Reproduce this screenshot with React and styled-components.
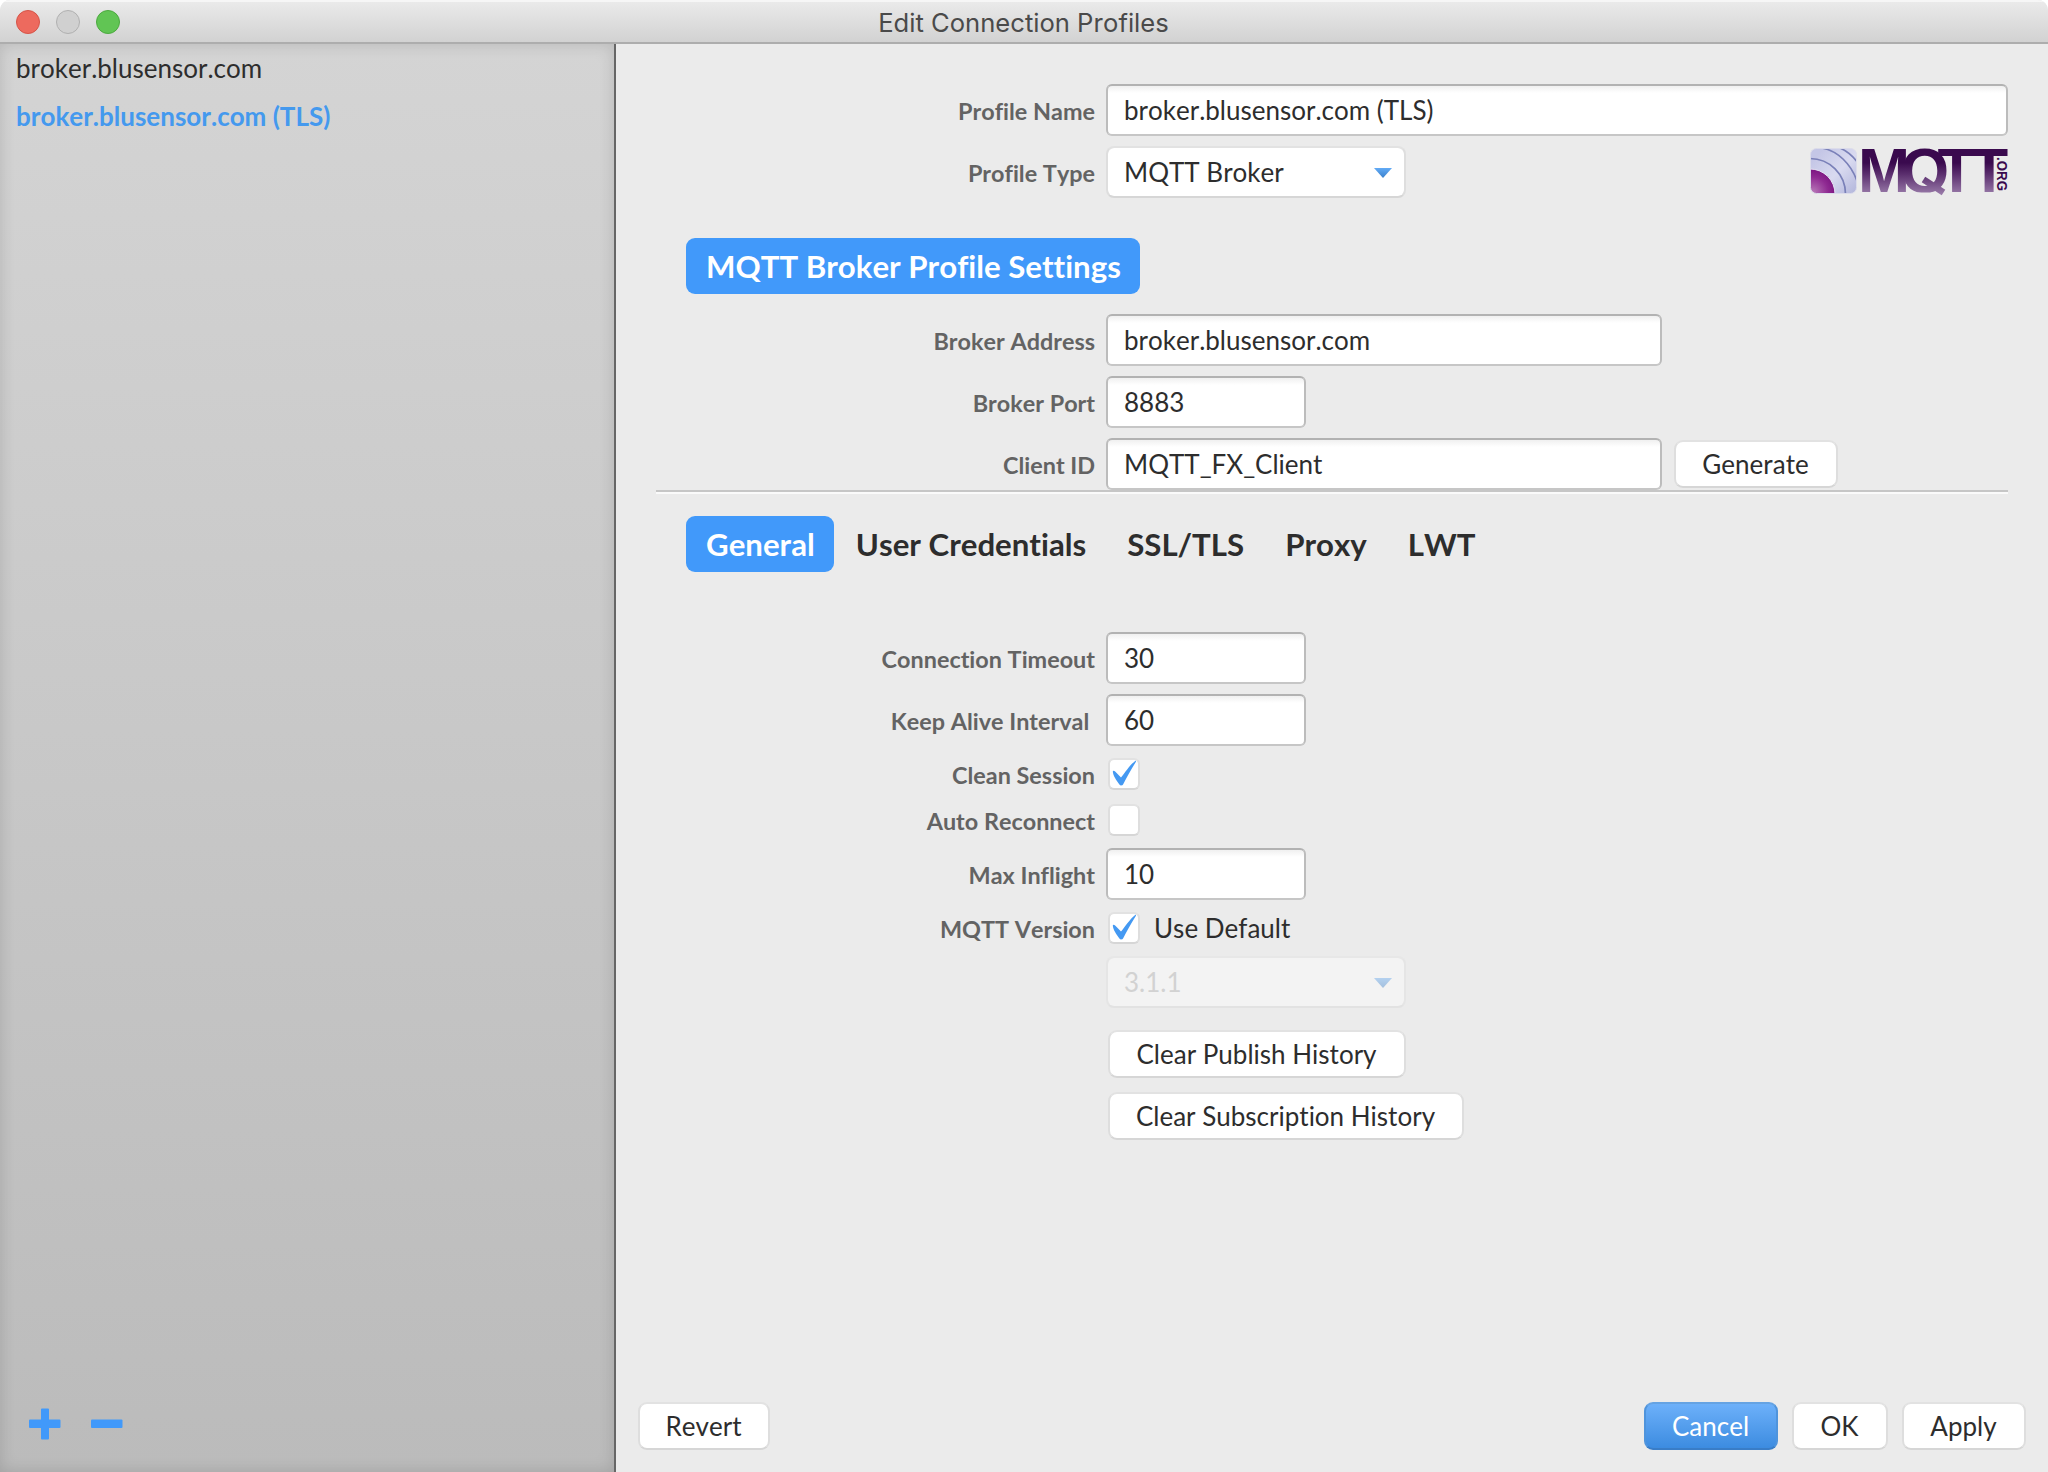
import React from "react";
import styled, { createGlobalStyle, css } from "styled-components";

const GlobalStyle = createGlobalStyle`
  * { box-sizing: border-box; }
  html, body { margin: 0; padding: 0; background: #fff; }
  body {
    font-family: Lato, "Noto Sans", sans-serif;
    font-size: 26px;
    font-kerning: none;
    font-variant-ligatures: none;
    color: #2d2d2d;
    overflow: hidden;
  }
`;

const Window = styled.div`
  display: flex;
  flex-direction: column;
  width: 2048px;
  height: 1472px;
  border-radius: 10px 10px 0 0;
  overflow: hidden;
  background: #ebebeb;
`;

const TitleBar = styled.header`
  flex: none;
  display: grid;
  grid-template-columns: 1fr auto 1fr;
  align-items: center;
  height: 44px;
  padding: 0 17px 0 16px;
  background: linear-gradient(#ebebeb, #d2d2d2);
  border-bottom: 2px solid #adadad;
  box-shadow: inset 0 2px 0 #f6f6f6;
`;

const Title = styled.h1`
  margin: 3px 0 0;
  font-family: Inter, Roboto, sans-serif;
  font-size: 25.6px;
  font-weight: 400;
  line-height: 30px;
  color: #4a4a4a;
`;

const TrafficLights = styled.div`
  display: flex;
  gap: 16px;
  padding-top: 2px;
`;

const Light = styled.span`
  width: 24px;
  height: 24px;
  border-radius: 50%;
  background: ${(p) => p.$fill};
  border: 1px solid ${(p) => p.$edge};
`;

const Body = styled.div`
  flex: 1;
  display: flex;
  min-height: 0;
`;

const Sidebar = styled.aside`
  flex: none;
  display: flex;
  flex-direction: column;
  justify-content: space-between;
  width: 616px;
  border-right: 2px solid #666;
  background: linear-gradient(#d4d4d4, #bbbbbb);
  box-shadow: inset 0 0 16px rgba(0, 0, 0, 0.14);
`;

const ProfileList = styled.ul`
  margin: 0;
  padding: 0;
  list-style: none;
`;

const ProfileItem = styled.li`
  height: 48px;
  padding: 0 16px;
  line-height: 48px;
  ${(p) =>
    p.$selected &&
    css`
      font-weight: 700;
      color: #4499ee;
    `}
`;

const ListActions = styled.div`
  display: flex;
  gap: 30px;
  padding: 0 29px 32px;
`;

const Panel = styled.main`
  flex: 1;
  display: flex;
  flex-direction: column;
  min-width: 0;
  padding: 40px 22px 22px;
`;

const Section = styled.section`
  display: flex;
  flex-direction: column;
  gap: 10px;
  padding: 0 18px;
  margin-top: ${(p) => p.$top || 0}px;
`;

const FormRow = styled.div`
  display: flex;
  align-items: center;
  gap: 10px;
  height: ${(p) => (p.$compact ? 36 : 52)}px;
`;

const Label = styled.label`
  flex: none;
  width: 440px;
  padding: 2px 1px 0 0;
  text-align: right;
  white-space: pre;
  font-size: 23.4px;
  font-weight: 700;
  color: #636363;
`;

const TextField = styled.input`
  ${(p) => (p.$width ? css`width: ${p.$width}px;` : css`flex: 1; min-width: 0;`)}
  height: 52px;
  padding: 0 16px;
  border: 2px solid;
  border-color: #b2b2b2 #bcbcbc #c6c6c6;
  border-radius: 6px;
  background: linear-gradient(#f0f0f0, #fff 7px);
  font: inherit;
  font-kerning: none;
  font-variant-ligatures: none;
  color: #2d2d2d;
  outline: none;
`;

const Combo = styled.div`
  display: flex;
  align-items: center;
  justify-content: space-between;
  width: 300px;
  height: 52px;
  padding: 0 12px 0 16px;
  border: 2px solid;
  border-color: #e2e2e2 #dedede #d6d6d6;
  border-radius: 8px;
  background: #fff;
  background-clip: padding-box;
  opacity: ${(p) => (p.$disabled ? 0.4 : 1)};
`;

const ComboText = styled.span`
  color: ${(p) => (p.$disabled ? "#adadad" : "inherit")};
`;

const ComboArrow = styled.svg`
  width: 18px;
  height: 10px;
  margin-top: 2px;
`;

const CheckBox = styled.span`
  display: flex;
  width: 32px;
  height: 32px;
  margin-left: 2px;
  border: 2px solid;
  border-color: #e2e2e2 #dedede #d6d6d6;
  border-radius: 6px;
  background: #fff;
  background-clip: padding-box;
`;

const CheckCaption = styled.span`
  margin-left: 4px;
`;

const Button = styled.button`
  width: ${(p) => p.$width}px;
  height: 48px;
  margin: 0 ${(p) => p.$inset || 0}px;
  padding: 0 1px 0 0;
  border: 2px solid;
  border-color: #e2e2e2 #dedede #d6d6d6;
  border-radius: 9px;
  background: #fff;
  font: inherit;
  font-kerning: none;
  font-variant-ligatures: none;
  color: #2d2d2d;
  ${(p) =>
    p.$primary &&
    css`
      color: #fff;
      background: linear-gradient(#6fb2fb, #3a8adf) border-box;
      border-color: #65a3e3 #4f94dc #397dc7;
    `}
`;

const BadgeHeading = styled.h2`
  align-self: flex-start;
  height: 56px;
  margin: 40px 0 20px 48px;
  padding: 0 19px 0 20px;
  border-radius: 9px;
  background: #4199fa;
  font-size: 31.2px;
  line-height: 56px;
  font-weight: 700;
  color: #fff;
`;

const Divider = styled.div`
  height: 4px;
  margin: 0 18px;
  background: linear-gradient(#c6c6c6 50%, #fafafa 50%);
`;

const Tabs = styled.nav`
  display: flex;
  gap: 2px;
  margin: 22px 0 0 48px;
`;

const Tab = styled.div`
  height: 56px;
  padding: 0 19px 0 20px;
  border-radius: 9px;
  font-size: 31.2px;
  line-height: 56px;
  font-weight: 700;
  ${(p) =>
    p.$active &&
    css`
      color: #fff;
      background: #4199fa;
    `}
`;

const HistoryActions = styled.div`
  display: flex;
  flex-direction: column;
  align-items: flex-start;
  gap: 14px;
  margin-top: 12px;
  padding-left: 452px;
`;

const Footer = styled.footer`
  display: flex;
  justify-content: space-between;
  margin-top: auto;
`;

const FooterGroup = styled.div`
  display: flex;
  gap: 14px;
`;

const Logo = styled.svg`
  flex: none;
  align-self: flex-start;
  width: 200px;
  height: 54px;
  margin: 0 -2px 0 auto;
  overflow: visible;
`;

const Dropdown = ({ value, disabled }) => (
  <Combo $disabled={disabled}>
    <ComboText $disabled={disabled}>{value}</ComboText>
    <ComboArrow viewBox="0 0 18 10">
      <defs>
        <linearGradient id="arrow" x1="0" y1="0" x2="0" y2="1">
          <stop offset="0" stopColor="#62abf6" />
          <stop offset="1" stopColor="#3a80cb" />
        </linearGradient>
      </defs>
      <path d="M0 0H18L9 10Z" fill="url(#arrow)" />
    </ComboArrow>
  </Combo>
);

const Check = ({ checked }) => (
  <CheckBox>
    {checked && (
      <svg width="28" height="28" viewBox="2 2 28 28">
        <path
          d="M4.8 13.4C4.8 12.4 6.4 12.8 7.4 13.8L13 19.6C17 14.6 22 7 26.6 3.4C27.6 2.4 28.4 2.8 27.8 4C23 11.6 18.6 19.6 15.2 26.2C14.4 27.8 12.2 27.8 11.2 26.2C8.6 22.4 5 17.6 4.8 13.4Z"
          fill="#4499f2"
        />
      </svg>
    )}
  </CheckBox>
);

const MqttLogo = () => (
  <Logo viewBox="0 0 200 54">
    <defs>
      <linearGradient id="wordmark" gradientUnits="userSpaceOnUse" x1="0" y1="3" x2="0" y2="49">
        <stop offset="0.3" stopColor="#3a0a4e" />
        <stop offset="0.55" stopColor="#5b2f6e" />
        <stop offset="1" stopColor="#9b7dab" />
      </linearGradient>
      <linearGradient id="waves" gradientUnits="userSpaceOnUse" x1="8" y1="8" x2="46" y2="46">
        <stop offset="0" stopColor="#c4c6e6" />
        <stop offset="0.5" stopColor="#d9daf0" />
        <stop offset="1" stopColor="#b4b7dc" />
      </linearGradient>
      <radialGradient id="core" gradientUnits="userSpaceOnUse" cx="3" cy="46" r="25">
        <stop offset="0" stopColor="#b777b7" />
        <stop offset="0.6" stopColor="#8f2a92" />
        <stop offset="1" stopColor="#76107c" />
      </radialGradient>
      <clipPath id="tile">
        <rect x="0.5" y="2.5" width="46" height="45" rx="6" />
      </clipPath>
      <clipPath id="baseline">
        <rect x="46" y="0" width="160" height="46.5" />
      </clipPath>
    </defs>
    <g clipPath="url(#tile)">
      <rect width="48" height="50" fill="url(#waves)" />
      <g fill="none" stroke="#7a80b8" strokeWidth="1.7">
        <path d="M0 12.500A35.500 35.500 0 0 1 35.500 48" />
        <path d="M12 2C28 5 41 18 47 35" />
        <path d="M30 2C37 5 43 10 48 17" />
      </g>
      <circle cx="0" cy="48" r="25" fill="url(#core)" stroke="#e4e2f2" strokeWidth="1" />
    </g>
    <rect x="0.5" y="2.5" width="46" height="45" rx="6" fill="none" stroke="#dcdcea" strokeWidth="1" />
    <text
      x="48 90.5 127.5 160"
      y="46"
      fontFamily="Liberation Sans, Arial, sans-serif"
      fontWeight="700"
      fontSize="62.5"
      fill="url(#wordmark)"
      clipPath="url(#baseline)"
    >
      MQTT
    </text>
    <path d="M113.5 33.5L133.5 46.5" stroke="url(#wordmark)" strokeWidth="6.5" />
    <text
      transform="translate(187 11) rotate(90)"
      fontFamily="Liberation Sans, Arial, sans-serif"
      fontWeight="700"
      fontSize="14.5"
      textLength="34"
      lengthAdjust="spacingAndGlyphs"
      fill="#3a0a4e"
    >
      .ORG
    </text>
  </Logo>
);

export default function App() {
  return (
    <>
      <GlobalStyle />
      <Window>
        <TitleBar>
          <TrafficLights>
            <Light $fill="#ed6a5e" $edge="#d55448" />
            <Light $fill="#d0d0d0" $edge="#b0b0b0" />
            <Light $fill="#61c554" $edge="#4ca93f" />
          </TrafficLights>
          <Title>Edit Connection Profiles</Title>
        </TitleBar>
        <Body>
          <Sidebar>
            <ProfileList>
              <ProfileItem>broker.blusensor.com</ProfileItem>
              <ProfileItem $selected>broker.blusensor.com (TLS)</ProfileItem>
            </ProfileList>
            <ListActions>
              <svg width="32" height="32" viewBox="0 0 32 32">
                <path
                  d="M12 1.5Q12 .5 13 .5H19Q20 .5 20 1.5V11.5H30.500Q31.500 11.500 31.500 12.500V19Q31.500 20 30.500 20H20V30.500Q20 31.500 19 31.500H13Q12 31.500 12 30.500V20H1Q0 20 0 19V12.500Q0 11.500 1 11.500H12Z"
                  fill="#4199fa"
                />
              </svg>
              <svg width="32" height="32" viewBox="0 0 32 32">
                <rect y="11.500" width="31.500" height="8.500" rx="1" fill="#4199fa" />
              </svg>
            </ListActions>
          </Sidebar>
          <Panel>
            <Section>
              <FormRow>
                <Label>Profile Name</Label>
                <TextField readOnly value="broker.blusensor.com (TLS)" />
              </FormRow>
              <FormRow>
                <Label>Profile Type</Label>
                <Dropdown value="MQTT Broker" />
                <MqttLogo />
              </FormRow>
            </Section>
            <BadgeHeading>MQTT Broker Profile Settings</BadgeHeading>
            <Section>
              <FormRow>
                <Label>Broker Address</Label>
                <TextField $width={556} readOnly value="broker.blusensor.com" />
              </FormRow>
              <FormRow>
                <Label>Broker Port</Label>
                <TextField $width={200} readOnly value="8883" />
              </FormRow>
              <FormRow>
                <Label>Client ID</Label>
                <TextField $width={556} readOnly value="MQTT_FX_Client" />
                <Button $width={164} $inset={2}>Generate</Button>
              </FormRow>
            </Section>
            <Divider />
            <Tabs>
              <Tab $active>General</Tab>
              <Tab>User Credentials</Tab>
              <Tab>SSL/TLS</Tab>
              <Tab>Proxy</Tab>
              <Tab>LWT</Tab>
            </Tabs>
            <Section $top={60}>
              <FormRow>
                <Label>Connection Timeout</Label>
                <TextField $width={200} readOnly value="30" />
              </FormRow>
              <FormRow>
                <Label>{"Keep Alive Interval "}</Label>
                <TextField $width={200} readOnly value="60" />
              </FormRow>
              <FormRow $compact>
                <Label>Clean Session</Label>
                <Check checked />
              </FormRow>
              <FormRow $compact>
                <Label>Auto Reconnect</Label>
                <Check />
              </FormRow>
              <FormRow>
                <Label>Max Inflight</Label>
                <TextField $width={200} readOnly value="10" />
              </FormRow>
              <FormRow $compact>
                <Label>MQTT Version</Label>
                <Check checked />
                <CheckCaption>Use Default</CheckCaption>
              </FormRow>
              <FormRow>
                <Label />
                <Dropdown value="3.1.1" disabled />
              </FormRow>
              <HistoryActions>
                <Button $width={298}>Clear Publish History</Button>
                <Button $width={356}>Clear Subscription History</Button>
              </HistoryActions>
            </Section>
            <Footer>
              <Button $width={132}>Revert</Button>
              <FooterGroup>
                <Button $width={134} $primary>Cancel</Button>
                <Button $width={96}>OK</Button>
                <Button $width={124}>Apply</Button>
              </FooterGroup>
            </Footer>
          </Panel>
        </Body>
      </Window>
    </>
  );
}
